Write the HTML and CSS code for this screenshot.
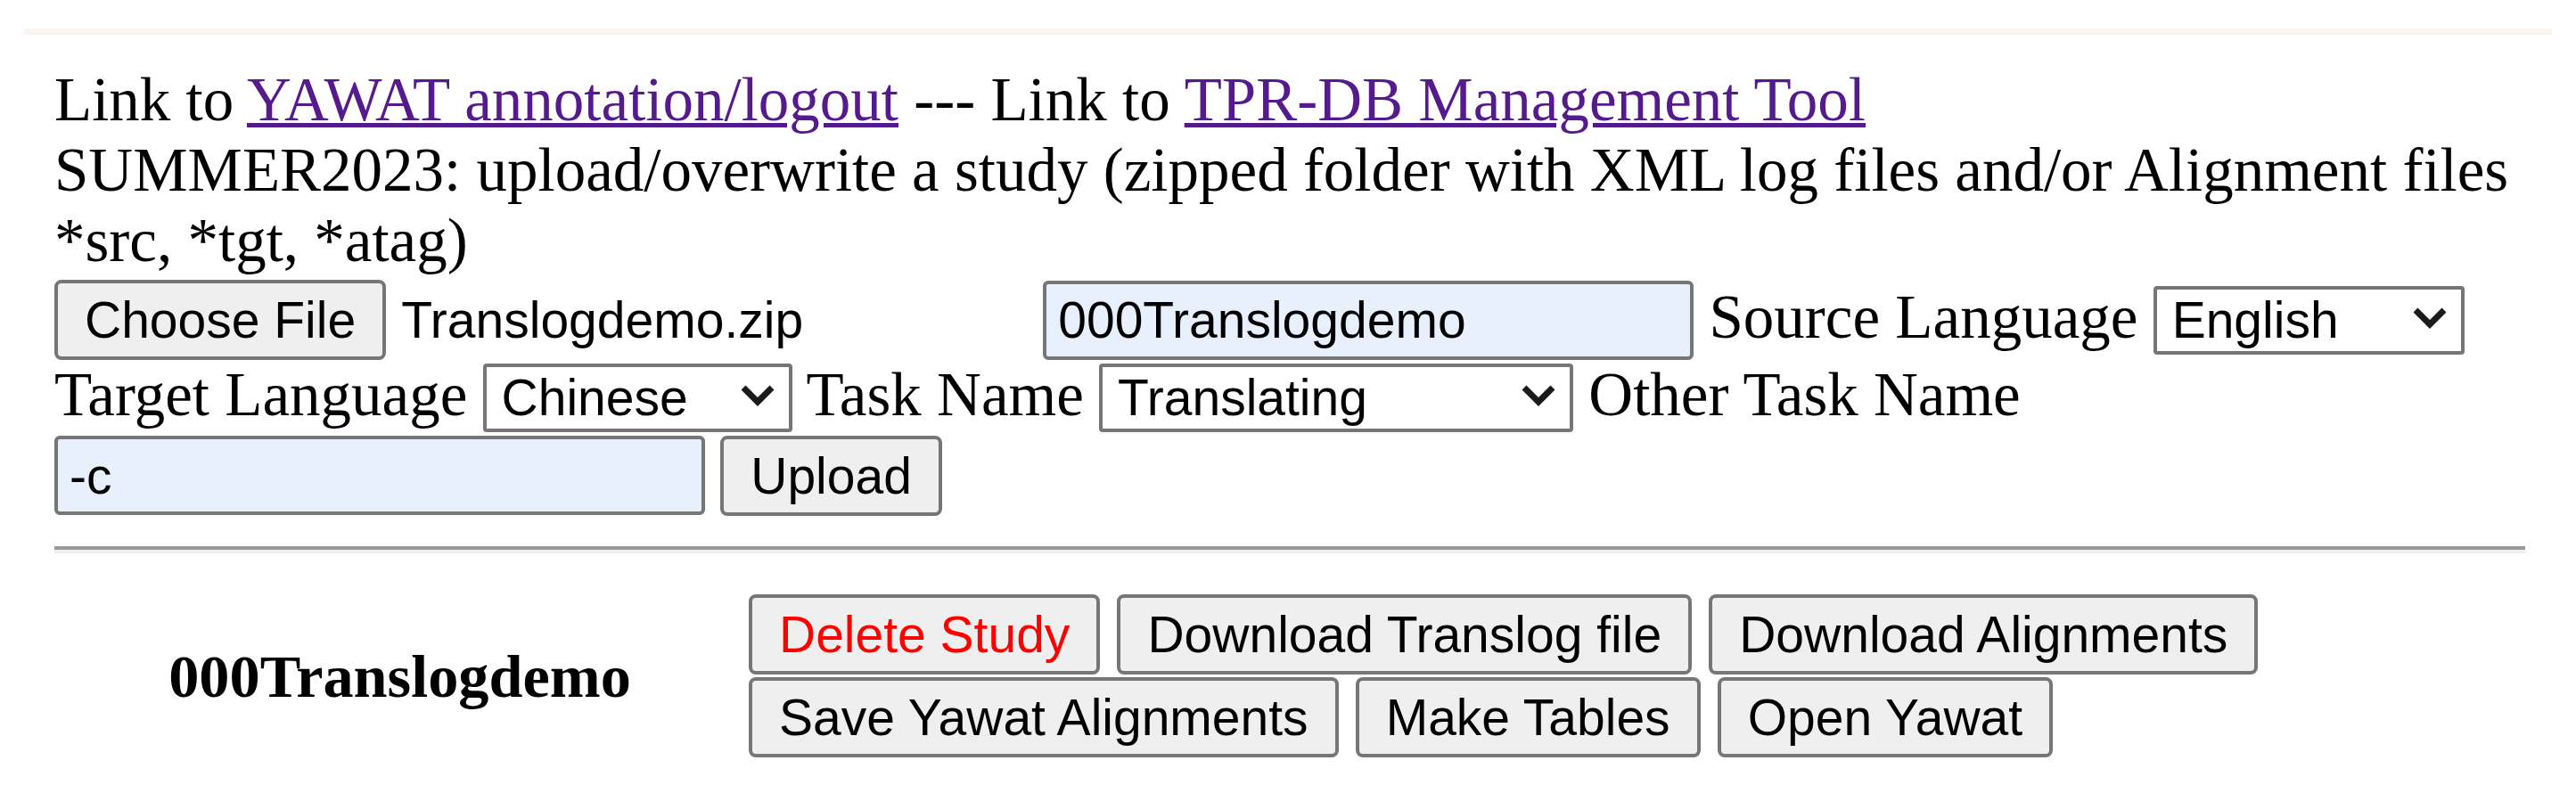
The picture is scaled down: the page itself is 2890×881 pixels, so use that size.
FILE: index.html
```html
<!DOCTYPE html>
<html lang="en">
<head>
<meta charset="utf-8">
<title>TPR-DB Study Upload</title>
<link rel="stylesheet" href="styles.css">
</head>
<body>
<div class="page">
  <div class="topline"></div>
  <div class="content">
    <div class="intro">Link to <a href="#" class="link">YAWAT annotation/logout</a> --- Link to <a href="#" class="link">TPR-DB Management Tool</a><br>SUMMER2023: upload/overwrite a study (zipped folder with XML log files and/or Alignment files *src, *tgt, *atag)</div>
    <form class="upload">
      <span class="file"><button type="button" class="btn btn-file">Choose File</button><span class="fname">Translogdemo.zip</span></span>
      <input class="field" type="text" value="000Translogdemo">
      Source Language
      <span class="sel sel-src"><select class="sel-box"><option>English</option></select><svg class="chev" viewBox="0 0 40 25" width="40" height="25"><path d="M4 4 L20 20 L36 4" fill="none" stroke="#1b1b1b" stroke-width="7"/></svg></span>
      Target Language
      <span class="sel sel-tgt"><select class="sel-box"><option>Chinese</option></select><svg class="chev" viewBox="0 0 40 25" width="40" height="25"><path d="M4 4 L20 20 L36 4" fill="none" stroke="#1b1b1b" stroke-width="7"/></svg></span>
      Task Name
      <span class="sel sel-task"><select class="sel-box"><option>Translating</option></select><svg class="chev" viewBox="0 0 40 25" width="40" height="25"><path d="M4 4 L20 20 L36 4" fill="none" stroke="#1b1b1b" stroke-width="7"/></svg></span>
      Other Task Name
      <input class="field" type="text" value="-c">
      <button type="button" class="btn">Upload</button>
    </form>
    <hr class="rule">
    <table class="studies">
      <tr>
        <td class="study-name">000Translogdemo</td>
        <td class="actions"><button type="button" class="btn btn-danger">Delete Study</button> <button type="button" class="btn">Download Translog file</button> <button type="button" class="btn">Download Alignments</button><br><button type="button" class="btn">Save Yawat Alignments</button> <button type="button" class="btn">Make Tables</button> <button type="button" class="btn">Open Yawat</button></td>
      </tr>
    </table>
  </div>
</div>
</body>
</html>
```
FILE: styles.css
```css
html, body {
  margin: 0;
  padding: 0;
  background: #ffffff;
}

body {
  font-family: "Liberation Serif", "Times New Roman", serif;
  font-size: 69px;
  color: #000000;
}

.page {
  padding: 32px 27px 0 27px;
}

.topline {
  height: 7px;
  background: #fbf5f1;
}

.content {
  padding: 0 30px 0 34px;
}

.intro {
  margin-top: 34px;
}

.link {
  color: #551a8b;
  text-decoration: underline;
  text-decoration-thickness: 5px;
}

.upload {
  margin: 0;
  padding-top: 4px;
}

.btn {
  font-family: "Liberation Sans", Arial, sans-serif;
  font-size: 57px;
  line-height: normal;
  color: #000000;
  background: #efefef;
  border: 4px solid #767676;
  border-radius: 8px;
  padding: 8px 30px;
  margin: 0;
  vertical-align: baseline;
}

.btn-danger {
  color: #ff0000;
}

.file {
  display: inline-block;
  width: 1092px;
  white-space: nowrap;
}

.btn-file {
  margin-right: 17px;
}

.fname {
  font-family: "Liberation Sans", Arial, sans-serif;
  font-size: 57px;
}

.field {
  box-sizing: border-box;
  width: 730px;
  height: 89px;
  padding: 0 13px;
  margin: 0;
  font-family: "Liberation Sans", Arial, sans-serif;
  font-size: 57px;
  color: #000000;
  background: #e8f0fe;
  border: 4px solid #767676;
  border-radius: 6px;
  vertical-align: baseline;
}

.sel {
  position: relative;
  display: inline-block;
  margin-bottom: 4px;
}

.sel-box {
  -webkit-appearance: none;
  appearance: none;
  box-sizing: border-box;
  height: 77px;
  padding: 0 0 0 17px;
  margin: 0;
  font-family: "Liberation Sans", Arial, sans-serif;
  font-size: 57px;
  color: #000000;
  background: #ffffff;
  border: 4px solid #767676;
  border-radius: 4px;
}

.sel-src .sel-box { width: 349px; }
.sel-tgt .sel-box { width: 347px; }
.sel-task .sel-box { width: 532px; }

.chev {
  position: absolute;
  right: 19px;
  top: 27px;
  pointer-events: none;
}

.rule {
  margin: 34px 0;
  height: 0;
  border: none;
  border-top: 4px solid #9a9a9a;
  border-bottom: 4px solid #eeeeee;
}

.studies {
  border-spacing: 8px;
  font-size: 68.3px;
}

.studies td {
  padding: 4px;
  vertical-align: middle;
}

.study-name {
  width: 751px;
  text-align: center;
  font-weight: bold;
}

.actions {
  word-spacing: 2px;
  line-height: normal;
}

.actions .btn {
  margin-bottom: 3px;
}
```
